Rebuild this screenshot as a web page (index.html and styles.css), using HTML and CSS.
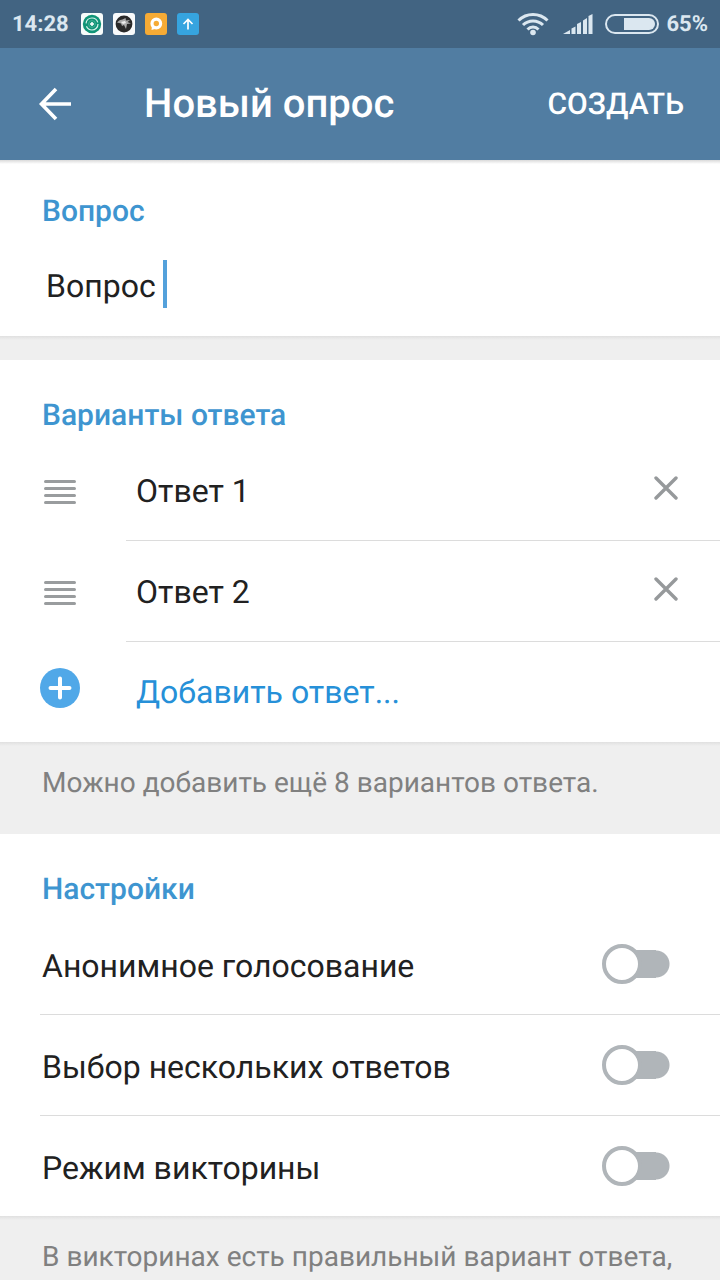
FILE: index.html
```html
<!DOCTYPE html>
<html lang="ru">
<head>
<meta charset="utf-8">
<meta name="viewport" content="width=device-width, initial-scale=1">
<title>Новый опрос</title>
<link rel="stylesheet" href="styles.css">
</head>
<body>
<div class="status-bar">
  <div class="status-left">
    <time class="clock">14:28</time>
    <svg class="app-icon" viewBox="0 0 22 22"><rect width="22" height="22" rx="3" fill="#f8fcfb"/><circle cx="11" cy="11" r="9.2" fill="#109477"/><circle cx="11" cy="11" r="6" fill="none" stroke="#d9f3ec" stroke-width="1.2" stroke-dasharray="16 3"/><circle cx="11" cy="11" r="3.4" fill="none" stroke="#4fb39b" stroke-width=".8"/><path d="M11 9v4M9 11h4" stroke="#fff" stroke-width="1.5"/></svg>
    <svg class="app-icon" viewBox="0 0 22 22"><rect width="22" height="22" rx="3" fill="#f8fafb"/><circle cx="11" cy="11" r="8.4" fill="#292929"/><path d="M4 9.500C7 6 10 7 12.500 5l.5 2.500 4-.5-2.500 2 3.500 1.500-4 .5-1 5-2-4-2 1-1-2.500z" fill="#a9a9a9"/><path d="M8 9l4-1 1 2-3 1z" fill="#eee"/></svg>
    <svg class="app-icon" viewBox="0 0 22 22"><rect width="22" height="22" rx="3" fill="#f6ab35"/><circle cx="11.300" cy="10.500" r="4.300" fill="none" stroke="#fff" stroke-width="3.200"/><path d="M7 13l-.5 4 5-1.500z" fill="#fff"/></svg>
    <svg class="app-icon" viewBox="0 0 22 22"><rect width="22" height="22" rx="3" fill="#36a4df"/><path d="M11 16.500V6.500M6.500 11L11 6.500l4.500 4.500" fill="none" stroke="#fff" stroke-width="1.700"/></svg>
  </div>
  <div class="status-right">
    <svg class="wifi" viewBox="0 0 32 24"><g fill="none" stroke="#dbe7f0" stroke-width="3"><path d="M1.500 8.500C9.500.5 22.500.5 30.500 8.500"/><path d="M6 13C11.500 7.500 20.500 7.500 26 13"/><path d="M10.500 17.500C13.500 14.300 18.500 14.300 21.500 17.500"/></g><circle cx="16" cy="20.500" r="2.800" fill="#dbe7f0"/></svg>
    <svg class="signal" viewBox="0 0 30 22"><path d="M0 21L7 17v4zM8.500 15.500l4-2V21h-4zM14 11l4-2v12h-4zM20 7.500L24 5v16h-4zM25.500 3l4-2v20h-4z" fill="#dbe7f0"/></svg>
    <svg class="battery" viewBox="0 0 54 20"><rect x="1" y="1" width="52" height="18" rx="9" fill="none" stroke="#dbe7f0" stroke-width="2"/><path d="M19 4h25a6 6 0 0 1 0 12H19z" fill="#dbe7f0"/></svg>
    <span class="charge">65%</span>
  </div>
</div>

<header class="app-bar">
  <button class="back" type="button" aria-label="Назад"><svg viewBox="0 0 34 34"><path d="M33 17H4M18 2L3.500 17 18 32" fill="none" stroke="#fff" stroke-width="3.600"/></svg></button>
  <h1 class="title">Новый опрос</h1>
  <button class="create" type="button">СОЗДАТЬ</button>
</header>

<main>
  <section class="card card-question">
    <h2 class="heading"><label for="question">Вопрос</label></h2>
    <div class="question">
      <input class="question-input" id="question" type="text" value="Вопрос">
      <span class="caret"></span>
    </div>
  </section>
  <div class="spacer"></div>

  <section class="card">
    <h2 class="heading">Варианты ответа</h2>
    <div class="option">
      <button class="drag" type="button" aria-label="Переместить"><svg viewBox="0 0 32 24"><path d="M1.500 1.500h29M1.500 8.500h29M1.500 15.500h29M1.500 22.500h29" stroke="#999c9e" stroke-width="3" stroke-linecap="round"/></svg></button>
      <div class="option-body">
        <input class="option-input" type="text" value="Ответ 1" aria-label="Ответ 1">
        <button class="remove" type="button" aria-label="Удалить"><svg viewBox="0 0 24 24"><path d="M2 2l20 20M22 2L2 22" stroke="#96999b" stroke-width="3.400" stroke-linecap="round"/></svg></button>
      </div>
    </div>
    <div class="option">
      <button class="drag" type="button" aria-label="Переместить"><svg viewBox="0 0 32 24"><path d="M1.500 1.500h29M1.500 8.500h29M1.500 15.500h29M1.500 22.500h29" stroke="#999c9e" stroke-width="3" stroke-linecap="round"/></svg></button>
      <div class="option-body">
        <input class="option-input" type="text" value="Ответ 2" aria-label="Ответ 2">
        <button class="remove" type="button" aria-label="Удалить"><svg viewBox="0 0 24 24"><path d="M2 2l20 20M22 2L2 22" stroke="#96999b" stroke-width="3.400" stroke-linecap="round"/></svg></button>
      </div>
    </div>
    <button class="add" type="button">
      <svg class="plus" viewBox="0 0 40 40"><circle cx="20" cy="20" r="20" fill="#50a8e8"/><path d="M20 10.500v19M10.500 20h19" stroke="#fff" stroke-width="4" stroke-linecap="round"/></svg>
      <span>Добавить ответ...</span>
    </button>
  </section>
  <p class="hint">Можно добавить ещё 8 вариантов ответа.</p>

  <section class="card">
    <h2 class="heading">Настройки</h2>
    <label class="setting"><span class="setting-name">Анонимное голосование</span><input class="switch" type="checkbox" role="switch"></label>
    <label class="setting"><span class="setting-name">Выбор нескольких ответов</span><input class="switch" type="checkbox" role="switch"></label>
    <label class="setting"><span class="setting-name">Режим викторины</span><input class="switch" type="checkbox" role="switch"></label>
  </section>
  <p class="hint hint-last">В викторинах есть правильный вариант ответа,</p>
</main>
</body>
</html>
```
FILE: styles.css
```css
*,
*::before {
  box-sizing: border-box;
}

body {
  margin: 0;
  background: #efefef;
  color: #212121;
  font: 32px/40px Roboto, "Noto Sans", sans-serif;
  text-rendering: geometricPrecision;
}

button,
input {
  margin: 0;
  padding: 0;
  border: 0;
  outline: 0;
  background: none;
  color: inherit;
  font: inherit;
  text-rendering: inherit;
}

svg {
  display: block;
}

.status-bar {
  display: flex;
  align-items: center;
  justify-content: space-between;
  height: 48px;
  padding: 0 12px;
  background: #426482;
  color: #dbe7f0;
  font-size: 22px;
  font-weight: 700;
}

.status-left,
.status-right {
  display: flex;
  align-items: center;
  gap: 10px;
}

.clock {
  padding: 2px 2px 0 0;
}

.charge {
  padding-top: 2px;
}

.app-icon {
  width: 22px;
  height: 22px;
}

.wifi {
  width: 32px;
  height: 24px;
  margin-right: 4px;
}

.signal {
  width: 30px;
  height: 22px;
  margin-right: 2px;
}

.battery {
  width: 54px;
  height: 20px;
  margin-right: -3px;
}

.app-bar {
  display: flex;
  align-items: center;
  height: 112px;
  padding: 0 36px;
  background: #517da2;
  color: #fff;
}

.back {
  width: 108px;
  padding-left: 2px;
}

.back svg {
  width: 34px;
  height: 34px;
}

.title {
  flex: 1;
  margin: 0;
  font-size: 40px;
  font-weight: 500;
}

.create {
  padding-top: 2px;
  font-size: 30px;
  font-weight: 500;
}

.card {
  padding-top: 36px;
  background: #fff;
}

.card-question {
  padding-top: 32px;
  background: linear-gradient(#dadada, #fff 4px);
}

.heading {
  margin: 0;
  padding: 1px 42px 5px;
  color: #3e95d0;
  font-size: 30px;
  font-weight: 500;
  line-height: 38px;
}

.question {
  display: flex;
  align-items: center;
  height: 100px;
  padding: 0 46px;
}

.question-input {
  field-sizing: content;
}

.caret {
  width: 4px;
  height: 48px;
  margin: 0 0 4px 7px;
  background: #54a1db;
}

.spacer {
  height: 24px;
}

.spacer,
.hint {
  background: linear-gradient(#e0e0e0, #efefef 4px);
}

.option {
  display: flex;
  height: 101px;
}

.drag {
  width: 126px;
  padding: 3px 0 0 44px;
}

.drag svg {
  width: 32px;
  height: 24px;
}

.option-body {
  display: flex;
  flex: 1;
  align-items: center;
  min-width: 0;
  padding: 0 42px 0 10px;
  border-bottom: 1px solid #dcdcdc;
}

.option-input {
  flex: 1;
  min-width: 0;
  padding-top: 2px;
}

.remove {
  padding-bottom: 4px;
}

.remove svg {
  width: 24px;
  height: 24px;
}

.add {
  display: flex;
  align-items: center;
  gap: 56px;
  width: 100%;
  height: 100px;
  padding: 0 40px;
  color: #2690d8;
  text-align: left;
}

.plus {
  width: 40px;
  height: 40px;
  margin-bottom: 8px;
}

.hint {
  margin: 0;
  padding: 25px 42px 35px;
  color: #808080;
  font-size: 28px;
  line-height: 32px;
}

.hint-last {
  padding-bottom: 7px;
}

.setting {
  display: flex;
  align-items: center;
  justify-content: space-between;
  height: 101px;
  margin-left: 40px;
  padding: 0 50px 0 2px;
  border-bottom: 1px solid #dcdcdc;
}

.setting:last-child {
  height: 100px;
  border-bottom: 0;
}

.setting-name {
  padding-top: 3px;
}

.switch {
  display: flex;
  align-items: center;
  width: 68px;
  height: 40px;
  appearance: none;
  background: radial-gradient(circle at 54px 20px, #b0b5b9 13px, transparent 14px),
    linear-gradient(#b0b5b9, #b0b5b9) 20px center / 34px 28px no-repeat;
}

.switch::before {
  content: "";
  width: 40px;
  height: 40px;
  border: 4px solid #b0b5b9;
  border-radius: 50%;
  background: #fff;
}

.switch:checked {
  justify-content: flex-end;
}
```
